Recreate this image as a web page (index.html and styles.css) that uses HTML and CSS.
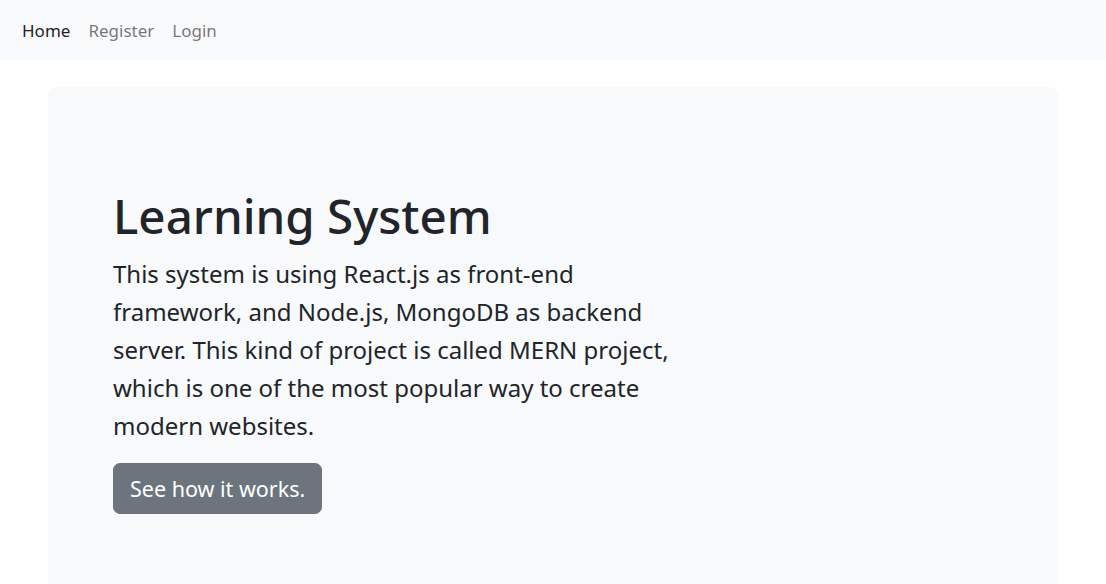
FILE: index.html
```html
<!DOCTYPE html>
<html lang="en">
<head>
<meta charset="utf-8">
<title>Learning System</title>
<link rel="stylesheet" href="styles.css">
</head>
<body>
<nav class="navbar">
  <a class="nav-link active" href="#">Home</a>
  <a class="nav-link" href="#">Register</a>
  <a class="nav-link" href="#">Login</a>
</nav>
<main class="page">
  <section class="hero">
    <h1 class="hero-title">Learning System</h1>
    <p class="hero-text">This system is using React.js as front-end framework, and Node.js, MongoDB as backend server. This kind of project is called MERN project, which is one of the most popular way to create modern websites.</p>
    <button class="btn" type="button">See how it works.</button>
  </section>
</main>
</body>
</html>
```
FILE: styles.css
```css
* { box-sizing: border-box; }
html, body { margin: 0; padding: 0; }
body {
  font-family: "Noto Sans", "Open Sans", sans-serif;
  color: #212529;
  background: #fff;
  overflow: hidden;
}
.navbar {
  height: 60px;
  background: #f8f9fa;
  display: flex;
  align-items: center;
  padding: 0 13px;
}
.nav-link {
  font-size: 17px;
  color: rgba(0, 0, 0, 0.55);
  text-decoration: none;
  padding: 0 9px;
}
.nav-link.active { color: rgba(0, 0, 0, 0.9); }
.page { padding: 27px 48px 0 48px; }
.hero {
  background: #f8f9fa;
  border-radius: 9px;
  height: 560px;
  padding: 100px 64px 0 65px;
}
.hero-title {
  font-size: 47.5px;
  font-weight: 500;
  line-height: 1.2;
  margin: 0 0 11px 0;
}
.hero-text {
  font-size: 24px;
  line-height: 38px;
  max-width: 592px;
  margin: 0 0 18px 0;
}
.btn {
  font-family: inherit;
  font-size: 21.5px;
  color: #fff;
  background: #6c757d;
  border: 1px solid #6c757d;
  border-radius: 7px;
  height: 51px;
  padding: 0 16px;
}
```
